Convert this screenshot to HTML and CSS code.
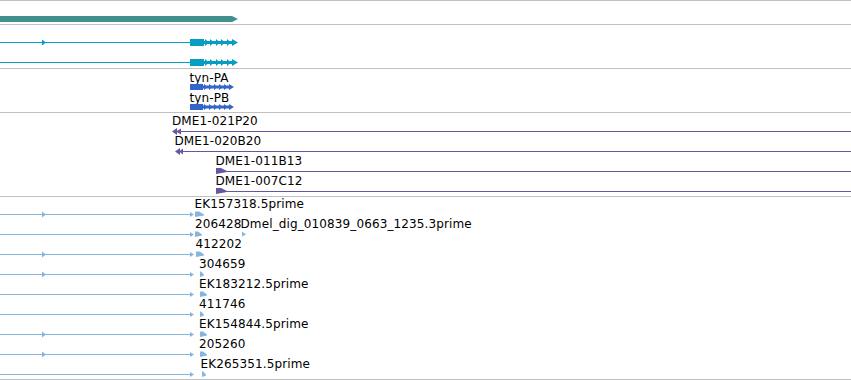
FILE: index.html
```html
<!DOCTYPE html>
<html lang="en">
<head>
  <meta charset="UTF-8" />
  <title>Track view</title>
  <link rel="stylesheet" href="styles.css">
</head>
<body>
  <div class="browser">

    <!-- gene span -->
    <section class="track track-gene">
      <svg class="canvas" width="851" height="23">
        <defs>
          <path id="tx" d="M190-3.5h14v7h-14z M204-1.5h30v3h-30z M205-3.5l4 3.5-4 3.5z M210-3.5l4 3.5-4 3.5z M216-3.5l4 3.5-4 3.5z M221-3.5l4 3.5-4 3.5z M227-3.5l4 3.5-4 3.5z M232-3.5l6 3.5-6 3.5z"/>
          <path id="tx-small" d="M190-3h13v6h-13z M203-1.5h27v3h-27z M204-3l4 3-4 3z M209-3l4 3-4 3z M214-3l4 3-4 3z M219-3l4 3-4 3z M224-3l4 3-4 3z M229-3l5 3-5 3z"/>
          <path id="tick" d="M42-3l4 3-4 3z"/>
          <path id="end" d="M190-2.5l4 2.5-4 2.5z"/>
        </defs>
        <polygon class="f-teal" points="0,15 232,15 238,18 232,21 0,21"/>
      </svg>
    </section>

    <!-- transcripts -->
    <section class="track track-tx">
      <svg class="canvas" width="851" height="43">
        <g class="c-cyan">
          <path class="line" d="M0 17.5H204"/>
          <use href="#tick" y="17.5"/>
          <use href="#tx" y="17.5"/>
          <path class="line" d="M0 37.5H204"/>
          <use href="#tx" y="37.5"/>
        </g>
      </svg>
    </section>

    <!-- named transcripts -->
    <section class="track track-named">
      <svg class="canvas" width="851" height="43">
        <text class="label" x="189.5" y="13">tyn-PA</text>
        <use class="c-blue" href="#tx-small" y="18"/>
        <text class="label" x="189.5" y="33">tyn-PB</text>
        <use class="c-blue" href="#tx-small" y="38"/>
      </svg>
    </section>

    <!-- clones -->
    <section class="track track-clones">
      <svg class="canvas" width="851" height="83">
        <g class="c-purple">
          <text class="label" x="172" y="12">DME1-021P20</text>
          <path class="line" d="M176 18.5H851"/>
          <polygon points="172,18.5 177,15 177,22"/>
          <polygon points="176,18.5 181,15.5 181,21.5"/>

          <text class="label" x="174.5" y="32">DME1-020B20</text>
          <path class="line" d="M178 38.5H851"/>
          <polygon points="175,38.5 180,35 180,42"/>
          <polygon points="179,38.5 183,35.5 183,41.5"/>

          <text class="label" x="215.5" y="52">DME1-011B13</text>
          <path class="line" d="M220 58.5H851"/>
          <polygon points="216,55 221,55 227,58 227,59 216,61"/>

          <text class="label" x="215.5" y="72">DME1-007C12</text>
          <path class="line" d="M220 78.5H851"/>
          <polygon points="216,75 221,75 227,78 227,79 216,81"/>
        </g>
      </svg>
    </section>

    <!-- ESTs -->
    <section class="track track-ests">
      <svg class="canvas" width="851" height="182">
        <g class="c-sky">
          <path class="line" d="M0 17.5H190 M0 37.5H190 M0 57.5H190 M0 77.5H190 M0 97.5H190 M0 117.5H190 M0 137.5H190 M0 157.5H190 M0 177.5H190"/>

          <use href="#tick" y="17.5"/>
          <use href="#tick" y="57.5"/>
          <use href="#tick" y="77.5"/>
          <use href="#tick" y="137.5"/>
          <use href="#tick" y="157.5"/>

          <use href="#end" y="17.5"/>
          <use href="#end" y="37.5"/>
          <use href="#end" y="57.5"/>
          <use href="#end" y="77.5"/>
          <use href="#end" y="97.5"/>
          <use href="#end" y="117.5"/>
          <use href="#end" y="137.5"/>
          <use href="#end" y="157.5"/>
          <use href="#end" y="177.5"/>

          <polygon points="195,14.5 199,14.5 204,17.5 204,18.5 195,20"/>
          <polygon points="195,34.5 198,34.5 202,37.5 202,38.5 195,40"/>
          <polygon points="242,34.5 246,37.5 242,39.5"/>
          <polygon points="196,54.5 200,54.5 204,57.5 204,58.5 196,60"/>
          <polygon points="200,74.5 201,74.5 204,77.5 204,78.5 200,80"/>
          <polygon points="200,94.5 203,94.5 207,97.5 207,98.5 200,100"/>
          <polygon points="200,114.5 201,114.5 204,117.5 204,118.5 200,120"/>
          <polygon points="200,134.5 203,134.5 207,137.5 207,138.5 200,140"/>
          <polygon points="200,154.5 203,154.5 207,157.5 207,158.5 200,160"/>
          <polygon points="202,174.5 203,174.5 206,177.5 206,178.5 202,180"/>
        </g>

        <text class="label" x="194.5" y="11">EK157318.5prime</text>
        <text class="label" x="195" y="31">206428</text>
        <text class="label" x="240.5" y="31">Dmel_dig_010839_0663_1235.3prime</text>
        <text class="label" x="195.5" y="51">412202</text>
        <text class="label" x="199" y="71">304659</text>
        <text class="label" x="199" y="91">EK183212.5prime</text>
        <text class="label" x="199" y="111">411746</text>
        <text class="label" x="199" y="131">EK154844.5prime</text>
        <text class="label" x="199" y="151">205260</text>
        <text class="label" x="200.5" y="171">EK265351.5prime</text>
      </svg>
    </section>

  </div>
</body>
</html>
```

FILE: styles.css
```css
body {
  margin: 0;
  padding: 0;
  background: #ffffff;
  font-family: "DejaVu Sans", sans-serif;
}

.browser {
  width: 851px;
  border-top: 1px solid #c0c0c0;
}

.track {
  border-bottom: 1px solid #c0c0c0;
}

.canvas {
  display: block;
  width: 851px;
}

.track-gene .canvas { height: 23px; }
.track-tx .canvas { height: 43px; }
.track-named .canvas { height: 43px; }
.track-clones .canvas { height: 83px; }
.track-ests .canvas { height: 182px; }

.label {
  font-family: "DejaVu Sans", sans-serif;
  font-size: 12px;
  letter-spacing: 0.12px;
  fill: #000000;
}

.line {
  fill: none;
  stroke: currentColor;
  stroke-width: 1;
  shape-rendering: crispEdges;
}

.c-cyan { color: #089ec3; fill: #089ec3; }
.c-blue { color: #3366cc; fill: #3366cc; }
.c-purple { color: #6a55a3; fill: #6a55a3; }
.c-sky { color: #86b6de; fill: #86b6de; }

.c-purple .label { fill: #000000; }

.f-teal { fill: #40908f; }
```
